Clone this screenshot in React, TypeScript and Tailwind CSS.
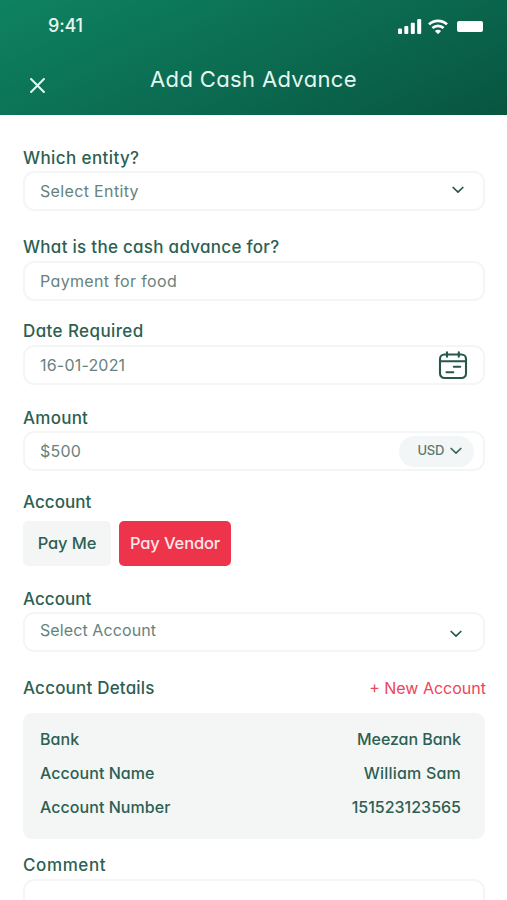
import React from "react";

type FieldProps = {
  label: string;
  labelClass?: string;
  className?: string;
  boxClass?: string;
  children?: React.ReactNode;
};

const Field = ({
  label,
  labelClass = "h-[26px]",
  className = "",
  boxClass = "h-10",
  children,
}: FieldProps) => {
  return (
    <div className={className}>
      <label
        className={`block text-[17px] leading-[26px] font-[450] text-[#2d5f52] ${labelClass}`}
      >
        {label}
      </label>
      <div
        className={`flex items-center justify-between rounded-[11px] border-2 border-[#f4f6f6] bg-white pl-[15px] text-base text-[#67827c] ${boxClass}`}
      >
        {children}
      </div>
    </div>
  );
};

const Chevron = ({ className = "" }: { className?: string }) => (
  <svg
    viewBox="0 0 12 8"
    fill="none"
    stroke="currentColor"
    strokeWidth="1.7"
    strokeLinecap="round"
    strokeLinejoin="round"
    className={`h-2 w-3 ${className}`}
  >
    <path d="M1.2 1.5 6 6.2l4.8-4.7" />
  </svg>
);

const CalendarIcon = () => (
  <svg
    viewBox="0 0 30 30"
    fill="none"
    stroke="#25584b"
    strokeWidth="2.1"
    strokeLinecap="round"
    className="mr-[15px] size-[30px]"
  >
    <rect x="2" y="4.5" width="26" height="23.5" rx="4.5" />
    <path d="M2 11.2h26M9 2.2v4.6M20.8 2.2v4.6M15.8 16.8h6.4M8.5 22.3h6.8" />
  </svg>
);

const StatusIcons = () => (
  <div className="flex items-end text-white">
    <svg viewBox="0 0 24 16" fill="currentColor" className="h-4 w-6">
      <rect x="0" y="10.5" width="4" height="5.5" rx="1" />
      <rect x="6.3" y="8" width="4" height="8" rx="1" />
      <rect x="12.8" y="4.8" width="4" height="11.2" rx="1" />
      <rect x="19.2" y="1" width="4" height="15" rx="1" />
    </svg>
    <svg
      viewBox="0 0 20 15"
      fill="none"
      stroke="currentColor"
      strokeWidth="2.7"
      className="ml-[6px] h-[15px] w-5"
    >
      <path d="M1 5.4a13 13 0 0 1 18 0" />
      <path d="M4.4 9a8.2 8.2 0 0 1 11.2 0" />
      <path d="M10 15.2 6.9 12a4.4 4.4 0 0 1 6.2 0Z" fill="currentColor" stroke="none" />
    </svg>
    <div className="mb-[2px] ml-[9px] h-[11px] w-[26px] rounded-[2px] bg-white" />
  </div>
);

const details = [
  {
    name: "Bank",
    value: "Meezan Bank",
    valueClass: "tracking-[-0.05px]",
  },
  {
    name: "Account Name",
    value: "William Sam",
    valueClass: "tracking-[0.2px]",
  },
  {
    name: "Account Number",
    value: "151523123565",
    valueClass: "tracking-[0]",
  },
];

const App = () => {
  return (
    <div className="h-[900px] w-full overflow-hidden bg-white font-['Inter',sans-serif] [font-feature-settings:'cv11']">
      <header className="h-[115px] bg-[linear-gradient(155deg,#0e8261_0%,#0b6a50_55%,#085540_100%)] text-[#e6f5ee]">
        <div className="flex h-[38px] items-start justify-between pr-[24px] pl-12">
          <span className="mt-[13px] text-[18px] leading-[26px] font-[450] tracking-[-0.2px]">
            9:41
          </span>
          <div className="mt-[18px]">
            <StatusIcons />
          </div>
        </div>
        <div className="mt-[27px] grid grid-cols-[150px_1fr_150px]">
          <svg
            viewBox="0 0 14 14"
            stroke="currentColor"
            strokeWidth="1.9"
            strokeLinecap="round"
            className="mt-[13px] ml-[30px] size-[15px]"
          >
            <path d="m1 1 12 12M13 1 1 13" />
          </svg>
          <h1 className="text-center text-[22px] leading-[28px] tracking-[0.35px] whitespace-nowrap">
            Add Cash Advance
          </h1>
        </div>
      </header>

      <main className="pt-[30px] pr-[22px] pl-[23px]">
        <Field label="Which entity?" labelClass="h-[26px] tracking-[0.4px]">
          <span className="mb-px tracking-[0.35px]">Select Entity</span>
          <Chevron className="mr-[19px] mb-[3px] text-[#25584b]" />
        </Field>

        <Field
          label="What is the cash advance for?"
          labelClass="-mt-px h-[27px] tracking-[0.28px]"
          className="mt-[24px]"
        >
          <span className="mb-px tracking-[0.35px]">Payment for food</span>
        </Field>

        <Field
          label="Date Required"
          labelClass="h-[27px] tracking-[0.4px]"
          className="mt-[17px]"
        >
          <span className="mb-px tracking-[0.2px]">16-01-2021</span>
          <CalendarIcon />
        </Field>

        <Field
          label="Amount"
          labelClass="h-[26px] tracking-[0.25px]"
          className="mt-[20px]"
        >
          <span className="mb-px tracking-[0.2px]">$500</span>
          <button className="mr-[9px] flex h-[31px] w-[75px] items-center justify-end gap-[6px] rounded-full bg-[#f3f6f6] pr-[12px] text-[13px] font-[450] tracking-[-0.3px] text-[#5b7972]">
            USD
            <Chevron className="text-[#3d675c]" />
          </button>
        </Field>

        <div className="mt-[18px] font-[450] text-[#2d5f52]">
          <div className="h-[32px] text-[17px] leading-[26px] tracking-[0.05px]">
            Account
          </div>
          <div className="flex gap-2">
            <button className="h-[45px] w-[88px] rounded-[5px] bg-[#f4f6f6] text-[16.5px] tracking-[-0.1px]">
              Pay Me
            </button>
            <button className="h-[45px] w-[112px] rounded-[5px] bg-[#ee344b] text-[16.5px] tracking-[-0.15px] text-[#fde7ea]">
              Pay Vendor
            </button>
          </div>
        </div>

        <Field
          label="Account"
          labelClass="h-[26px] tracking-[0.05px]"
          className="mt-[20px]"
        >
          <span className="mb-[4px] tracking-[0.1px]">Select Account</span>
          <Chevron className="mt-1 mr-[21px] text-[#25584b]" />
        </Field>

        <div className="mt-[23px] flex h-[26px] items-center justify-between">
          <h2 className="pt-px text-[17px] font-[450] tracking-[0.2px] text-[#2d5f52]">
            Account Details
          </h2>
          <button className="-mr-px pb-px text-base text-[#ee4359]">
            + New Account
          </button>
        </div>

        <div className="mt-[12px] h-[126px] rounded-[9px] bg-[#f4f6f6] pt-[9px] pr-[24px] pl-[17px] text-base font-[450] text-[#2d5f52]">
          {details.map((row) => (
            <div key={row.name} className="flex h-[34px] items-center justify-between">
              <span className="tracking-[0.05px]">{row.name}</span>
              <span className={row.valueClass}>{row.value}</span>
            </div>
          ))}
        </div>

        <Field
          label="Comment"
          labelClass="h-[27px] tracking-[0.6px]"
          className="mt-[13px]"
          boxClass="h-[90px]"
        />
      </main>
    </div>
  );
};

export default App;
